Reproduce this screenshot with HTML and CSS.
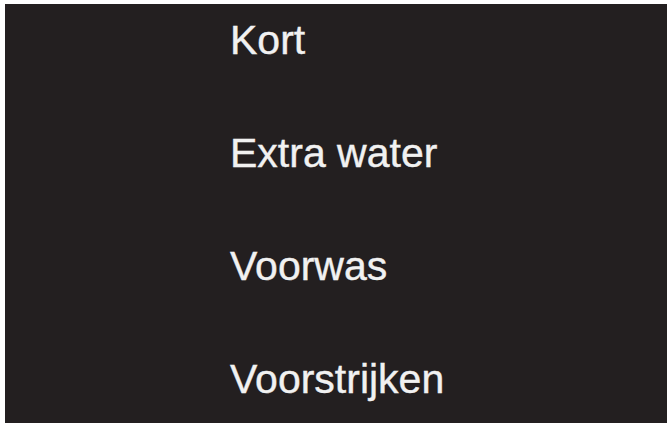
FILE: index.html
```html
<!DOCTYPE html>
<html lang="nl">
<head>
<meta charset="utf-8">
<link rel="stylesheet" href="styles.css">
</head>
<body>
<div class="panel">
  <ul class="menu">
    <li class="item">Kort</li>
    <li class="item">Extra water</li>
    <li class="item">Voorwas</li>
    <li class="item">Voorstrijken</li>
  </ul>
</div>
</body>
</html>
```
FILE: styles.css
```css
html, body {
  margin: 0;
  padding: 0;
  background: #ffffff;
  width: 670px;
  height: 423px;
  overflow: hidden;
}
.panel {
  margin: 4px 3px 0 5px;
  height: 419px;
  background: #231f20;
  padding: 16px 0 0 225px;
  box-sizing: border-box;
}
.menu {
  list-style: none;
  margin: 0;
  padding: 0;
  display: flex;
  flex-direction: column;
  gap: 72px;
}
.item {
  font-family: "Liberation Sans", Arial, sans-serif;
  font-size: 41px;
  line-height: 41px;
  color: #f1f1f1;
  -webkit-text-stroke: 0.4px #f1f1f1;
}
```
